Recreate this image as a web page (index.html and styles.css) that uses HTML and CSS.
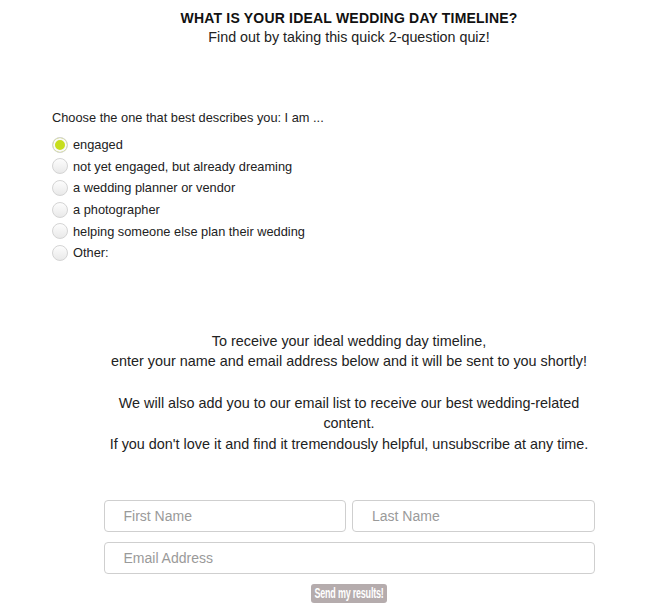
FILE: index.html
```html
<!DOCTYPE html>
<html lang="en">
  <head>
    <meta charset="UTF-8" />
    <meta name="viewport" content="width=device-width, initial-scale=1.0" />
    <title>Wedding Day Timeline Quiz</title>
    <link rel="stylesheet" href="styles.css">
  </head>
  <body>
    <div class="page">
      <div class="header">
        <h1>WHAT IS YOUR IDEAL WEDDING DAY TIMELINE?</h1>
        <p>Find out by taking this quick 2-question quiz!</p>
      </div>

      <div class="question">
        <div class="question-label">Choose the one that best describes you: I am ...</div>
        <label class="option"><input type="radio" name="who" checked /> engaged</label>
        <label class="option"><input type="radio" name="who" /> not yet engaged, but already dreaming</label>
        <label class="option"><input type="radio" name="who" /> a wedding planner or vendor</label>
        <label class="option"><input type="radio" name="who" /> a photographer</label>
        <label class="option"><input type="radio" name="who" /> helping someone else plan their wedding</label>
        <label class="option"><input type="radio" name="who" /> Other:</label>
      </div>

      <div class="info">
        <p>To receive your ideal wedding day timeline,<br />enter your name and email address below and it will be sent to you shortly!</p>
        <p>We will also add you to our email list to receive our best wedding-related content.<br />If you don't love it and find it tremendously helpful, unsubscribe at any time.</p>
      </div>

      <form class="signup">
        <div class="row">
          <input type="text" placeholder="First Name" />
          <input type="text" placeholder="Last Name" />
        </div>
        <input type="email" placeholder="Email Address" />
        <button type="button"><span>Send my results!</span></button>
      </form>
    </div>
  </body>
</html>
```

FILE: styles.css
```css
body {
  font-family: "Liberation Sans", Arial, sans-serif;
  margin: 0;
  padding: 0;
  background-color: #fff;
  color: #222;
}
.page {
  padding: 10px 8px 0 44px;
}
.header {
  text-align: center;
}
.header h1 {
  font-size: 14px;
  font-weight: bold;
  letter-spacing: 0.2px;
  line-height: 17px;
  margin: 0 0 2px;
  color: #111;
}
.header p {
  font-size: 14.3px;
  line-height: 17px;
  margin: 0;
}
.question {
  margin-top: 64px;
  padding-left: 8px;
  font-size: 12.8px;
}
.question-label {
  line-height: 16px;
  margin-bottom: 8px;
}
.option {
  display: flex;
  align-items: center;
  height: 21.6px;
  gap: 5px;
}
.option input {
  appearance: none;
  -webkit-appearance: none;
  margin: 0;
  width: 16px;
  height: 16px;
  border-radius: 50%;
  border: 1px solid #d4d4d4;
  background: linear-gradient(#fdfdfd, #e9e9e9);
  box-sizing: border-box;
}
.option input:checked {
  background: #c7de1c;
  box-shadow: inset 0 0 0 2px #fafafa;
}
.info {
  margin-top: 67px;
  width: 500px;
  margin-left: auto;
  margin-right: auto;
  text-align: center;
  font-size: 14.4px;
  line-height: 20.7px;
}
.info p {
  margin: 0 0 20.7px;
}
.signup {
  width: 491px;
  margin: 45px auto 0;
  display: flex;
  flex-direction: column;
  align-items: center;
  gap: 10px;
}
.row {
  display: flex;
  gap: 6px;
  width: 100%;
}
.signup input {
  width: 100%;
  height: 32px;
  padding: 0 19px;
  border: 1px solid #cfcfcf;
  border-radius: 4px;
  font-family: "Liberation Sans", Arial, sans-serif;
  font-size: 14px;
  color: #333;
  box-sizing: border-box;
}
.signup input::placeholder {
  color: #9a9a9a;
}
button {
  display: flex;
  justify-content: center;
  align-items: center;
  width: 76px;
  height: 19px;
  padding: 0;
  background-color: #b5acad;
  color: #fff;
  border: none;
  border-radius: 3px;
  cursor: pointer;
}
button span {
  display: inline-block;
  white-space: nowrap;
  font-family: "Liberation Sans", Arial, sans-serif;
  font-weight: bold;
  font-size: 14px;
  letter-spacing: -0.3px;
  transform: scaleX(0.64);
}
```
